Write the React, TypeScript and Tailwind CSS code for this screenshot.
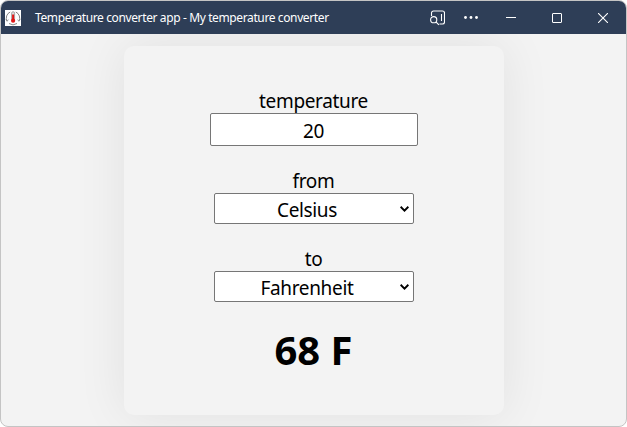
import React, { useState } from 'react';

type Unit = 'Celsius' | 'Fahrenheit' | 'Kelvin';
const UNITS: Unit[] = ['Celsius', 'Fahrenheit', 'Kelvin'];

function convert(value: number, from: Unit, to: Unit) {
  const celsius = from === 'Celsius' ? value : from === 'Kelvin' ? value - 273.15 : ((value - 32) * 5) / 9;
  const result = to === 'Celsius' ? celsius : to === 'Kelvin' ? celsius + 273.15 : (celsius * 9) / 5 + 32;
  return Math.round(result * 100) / 100;
}

function AppIcon() {
  return (
    <svg className="h-4 w-4 shrink-0 bg-white" viewBox="0 0 16 16" fill="none">
      <path d="M5.2 2A6.6 6.6 0 0 0 2.1 11.2M10.8 2A6.6 6.6 0 0 1 13.9 11.2M4 13.5A7 7 0 0 0 12 13.5" stroke="#777" strokeWidth="0.9" />
      <path d="M.7 9.3l1.4 1.9 1.3-1.6M15.3 9.3l-1.4 1.9-1.3-1.6" stroke="#888" strokeWidth="0.8" />
      <rect x="6.6" y="1.7" width="3" height="9" rx="1.5" fill="#ddd" stroke="#888" strokeWidth="0.7" />
      <path d="M8.1 4.5v6" stroke="#e01818" strokeWidth="2" />
      <circle cx="8.1" cy="10.7" r="2.1" fill="#e01818" />
    </svg>
  );
}

function TitleBar() {
  return (
    <header className="flex h-[33px] shrink-0 items-center bg-[#2e3e57] pl-1 text-white">
      <AppIcon />
      <h1 className="ml-3.5 w-[296px] whitespace-nowrap text-[12px] leading-4 tracking-[-0.38px]">Temperature converter app - My temperature converter</h1>
      <div className="ml-auto flex h-full items-center">
        <button className="flex h-full w-[34px] items-center justify-center" aria-label="Search in page">
          <svg className="h-4 w-4" viewBox="0 0 16 16" fill="none" stroke="white" strokeWidth="1.1">
            <path d="M2.5 6V3a2 2 0 0 1 2-2h9a2 2 0 0 1 2 2v9a2 2 0 0 1-2 2H10.5M12.5 4v7" />
            <circle cx="4.7" cy="9.7" r="3.1" />
            <path d="M6.9 11.9l3 3" />
          </svg>
        </button>
        <button className="flex h-full w-[34px] items-center justify-center" aria-label="More">
          <svg className="h-4 w-4" viewBox="0 0 16 16" fill="white">
            <circle cx="2.5" cy="7.5" r="1.4" />
            <circle cx="8" cy="7.5" r="1.4" />
            <circle cx="13.5" cy="7.5" r="1.4" />
          </svg>
        </button>
        <button className="flex h-full w-[46px] items-center justify-center" aria-label="Minimize">
          <svg className="h-2.5 w-2.5" viewBox="0 0 10 10" stroke="white"><path d="M0 4.5h10" /></svg>
        </button>
        <button className="flex h-full w-[46px] items-center justify-center" aria-label="Maximize">
          <svg className="h-2.5 w-2.5" viewBox="0 0 10 10" fill="none" stroke="white"><rect x="0.5" y="0.5" width="9" height="9" rx="0.5" /></svg>
        </button>
        <button className="flex h-full w-[46px] items-center justify-center" aria-label="Close">
          <svg className="h-2.5 w-2.5" viewBox="0 0 10 10" stroke="white" strokeWidth="1.1"><path d="M0 0l10 10M10 0L0 10" /></svg>
        </button>
      </div>
    </header>
  );
}

function UnitSelect({ value, onChange }: { value: Unit; onChange: (unit: Unit) => void }) {
  return (
    <div className="grid h-[31px] w-[200px] items-center rounded-[2px] border border-[#767676] bg-white">
      <select
        className="col-start-1 row-start-1 h-[29px] w-full appearance-none bg-transparent pr-[13px] pt-[3px] text-center text-[19px] leading-[26px] tracking-[-0.35px]"
        value={value}
        onChange={(e) => onChange(e.target.value as Unit)}
      >
        {UNITS.map((unit) => <option key={unit}>{unit}</option>)}
      </select>
      <svg className="pointer-events-none col-start-1 row-start-1 mr-1 h-[6px] w-[9px] justify-self-end" viewBox="0 0 9 6" fill="none" stroke="black" strokeWidth="2">
        <path d="M0.6 0.8L4.5 4.6L8.4 0.8" />
      </svg>
    </div>
  );
}

export default function App() {
  const [value, setValue] = useState('20');
  const [from, setFrom] = useState<Unit>('Celsius');
  const [to, setTo] = useState<Unit>('Fahrenheit');

  return (
    <div className="h-[427px] w-[627px] bg-white font-['Noto_Sans','Open_Sans',sans-serif] text-black">
      <div className="flex h-full flex-col overflow-hidden rounded-lg border border-[#c4c4c4] bg-[#f3f3f3]">
        <TitleBar />
        <main className="flex grow justify-center overflow-hidden pt-3">
          <form className="flex h-[369px] w-[380px] flex-col items-center rounded-[10px] bg-[#f3f3f3] pt-[42px] text-[19px] tracking-[-0.35px] shadow-[0_0_50px_rgba(0,0,0,0.08)]">
            <label className="h-[25px] leading-[27px]">temperature</label>
            <input
              className="h-[33px] w-[208px] rounded-[2px] border border-[#767676] bg-white pt-0.5 text-center text-[19px] leading-7"
              value={value}
              onChange={(e) => setValue(e.target.value)}
            />
            <label className="mt-[22px] h-[25px] leading-[27px]">from</label>
            <UnitSelect value={from} onChange={setFrom} />
            <label className="mt-[22px] h-[25px] leading-[27px]">to</label>
            <UnitSelect value={to} onChange={setTo} />
            <output className="mt-[21px] text-[40px] font-bold leading-[54px] tracking-normal">
              {convert(Number(value), from, to)} {to[0]}
            </output>
          </form>
        </main>
      </div>
    </div>
  );
}
